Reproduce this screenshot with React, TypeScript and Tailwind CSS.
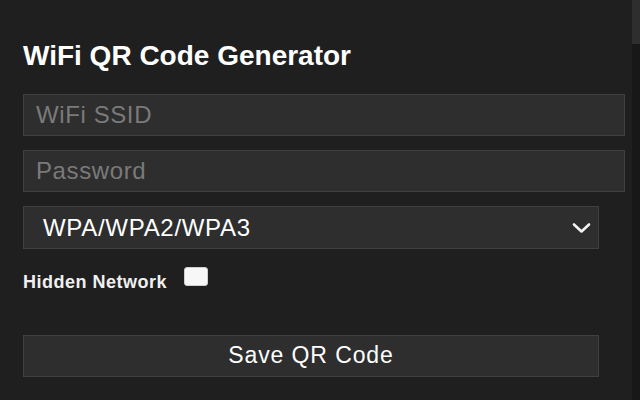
import { useState } from "react";

const font = { fontFamily: '"Liberation Sans", Arial, sans-serif' };

export default function App() {
  const [ssid, setSsid] = useState("");
  const [password, setPassword] = useState("");
  const [hidden, setHidden] = useState(false);

  return (
    <div className="flex h-[400px] w-[640px] overflow-hidden bg-[#1f1f1f]" style={font}>
      <main className="flex flex-1 flex-col pl-[23px] pt-[42px]">
        <h1 className="text-[28px] font-bold leading-[28px] text-white">
          WiFi QR Code Generator
        </h1>

        <input
          value={ssid}
          onChange={(e) => setSsid(e.target.value)}
          placeholder="WiFi SSID"
          className="mt-[24px] h-[42px] w-[602px] border border-[#404040] bg-[#2e2e2e] pl-3 text-[24px] tracking-[0.6px] text-white outline-none placeholder:text-[#7a7a7a]"
        />
        <input
          value={password}
          onChange={(e) => setPassword(e.target.value)}
          type="password"
          placeholder="Password"
          className="mt-[14px] h-[42px] w-[602px] border border-[#404040] bg-[#2e2e2e] pl-3 text-[24px] tracking-[0.6px] text-white outline-none placeholder:text-[#7a7a7a]"
        />

        <div className="mt-[14px] flex h-[43px] w-[576px] items-center justify-between border border-[#404040] bg-[#2e2e2e] pl-[19px] pr-[7px]">
          <span className="text-[24px] tracking-[0.7px] text-white">WPA/WPA2/WPA3</span>
          <svg width="19" height="12" viewBox="0 0 19 12" fill="none">
            <path d="M2 2.5l7.5 7 7.5-7" stroke="#f2f2f2" strokeWidth="2.6" strokeLinecap="round" strokeLinejoin="round" />
          </svg>
        </div>

        <label className="mt-[18px] flex items-start gap-[17px]">
          <span className="pt-[5px] text-[18px] font-bold leading-[20px] tracking-[0.5px] text-[#f0f0f0]">
            Hidden Network
          </span>
          <button
            type="button"
            onClick={() => setHidden(!hidden)}
            className="h-[19px] w-[24px] rounded-[3px] border border-[#cfcfcf] bg-[#f7f7f7]"
          >
            {hidden ? <span className="text-[12px] leading-none text-black">✓</span> : null}
          </button>
        </label>

        <button
          type="button"
          className="mt-[43px] flex h-[42px] w-[576px] items-center justify-center border border-[#404040] bg-[#2e2e2e] pb-[2px] text-[23px] tracking-[0.9px] text-white"
        >
          Save QR Code
        </button>
      </main>

      <div className="flex w-[8px] flex-col bg-[#181818]">
        <div className="h-[44px] bg-[#2e2e2e]" />
      </div>
    </div>
  );
}
